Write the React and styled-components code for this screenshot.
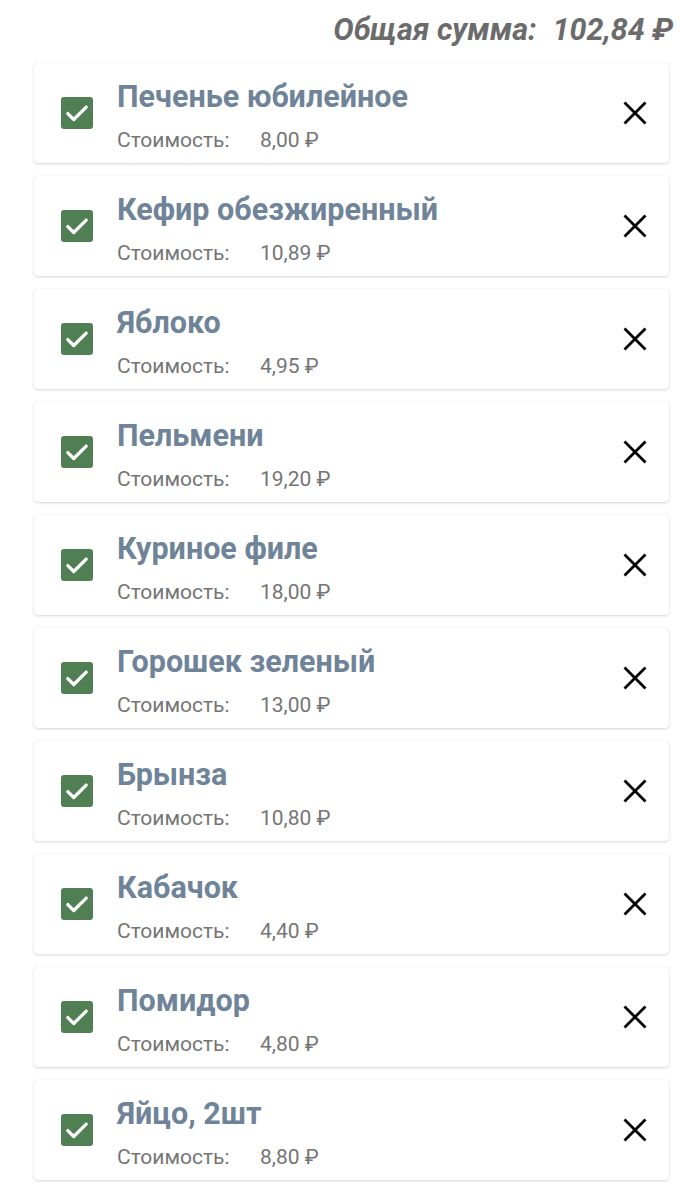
import React from 'react'
import styled, { createGlobalStyle } from 'styled-components'

const items = [
  { name: 'Печенье юбилейное', price: '8,00' },
  { name: 'Кефир обезжиренный', price: '10,89' },
  { name: 'Яблоко', price: '4,95' },
  { name: 'Пельмени', price: '19,20' },
  { name: 'Куриное филе', price: '18,00' },
  { name: 'Горошек зеленый', price: '13,00' },
  { name: 'Брынза', price: '10,80' },
  { name: 'Кабачок', price: '4,40' },
  { name: 'Помидор', price: '4,80' },
  { name: 'Яйцо, 2шт', price: '8,80' }
]

const GlobalStyle = createGlobalStyle`
  body {
    margin: 0;
    background: #fff;
    font-family: Roboto, "Noto Sans", sans-serif;
  }
`

const Page = styled.div`
  width: 697px;
  height: 1200px;
  overflow: hidden;
  padding: 0 28px 0 34px;
  box-sizing: border-box;
`

const Total = styled.div`
  display: flex;
  justify-content: flex-end;
  gap: 16px;
  padding: 13px 0 0;
  margin-right: -4px;
  height: 48px;
  box-sizing: border-box;
  font-size: 30.5px;
  font-weight: 700;
  font-style: italic;
  color: #6b6b6b;
  line-height: 34px;
`

const List = styled.div`
  display: flex;
  flex-direction: column;
  gap: 13px;
  margin-top: 15px;
`

const Card = styled.div`
  display: flex;
  align-items: center;
  height: 100px;
  box-sizing: border-box;
  background: #fff;
  border-radius: 4px;
  box-shadow: 0 1px 3px rgba(0, 0, 0, 0.16), 0 0 1px rgba(0, 0, 0, 0.1);
  padding: 0 22px 0 27px;
`

const Check = styled.div`
  width: 32px;
  height: 32px;
  border-radius: 3px;
  background: #4f7f53;
  display: flex;
  align-items: center;
  justify-content: center;
  flex-shrink: 0;
`

const Info = styled.div`
  flex: 1;
  margin-left: 24px;
  display: flex;
  flex-direction: column;
  margin-top: 6px;
`

const Title = styled.div`
  font-size: 30.5px;
  font-weight: 700;
  color: #6f8399;
  line-height: 36px;
`

const Cost = styled.div`
  display: flex;
  margin-top: 12px;
  font-size: 21px;
  color: #757575;
  line-height: 26px;
`

const CostLabel = styled.span`
  width: 143px;
`

const Remove = styled.button`
  border: 0;
  background: none;
  padding: 0;
  width: 24px;
  height: 24px;
  display: flex;
  cursor: pointer;
`

const CheckMark = () => (
  <svg width="26" height="26" viewBox="0 0 24 24" fill="none">
    <path d="M3.5 12.5l5.5 5.5L20.5 6.5" stroke="#fff" strokeWidth="3" strokeLinecap="round" strokeLinejoin="round" />
  </svg>
)

const Cross = () => (
  <svg width="24" height="24" viewBox="0 0 24 24" fill="none">
    <path d="M1.5 1.5l21 21M22.5 1.5l-21 21" stroke="#000" strokeWidth="2.8" />
  </svg>
)

export default function App() {
  return (
    <Page>
      <GlobalStyle />
      <Total>
        <span>Общая сумма:</span>
        <span>102,84 ₽</span>
      </Total>
      <List>
        {items.map((item) => (
          <Card key={item.name}>
            <Check><CheckMark /></Check>
            <Info>
              <Title>{item.name}</Title>
              <Cost>
                <CostLabel>Стоимость:</CostLabel>
                <span>{item.price} ₽</span>
              </Cost>
            </Info>
            <Remove><Cross /></Remove>
          </Card>
        ))}
      </List>
    </Page>
  )
}
